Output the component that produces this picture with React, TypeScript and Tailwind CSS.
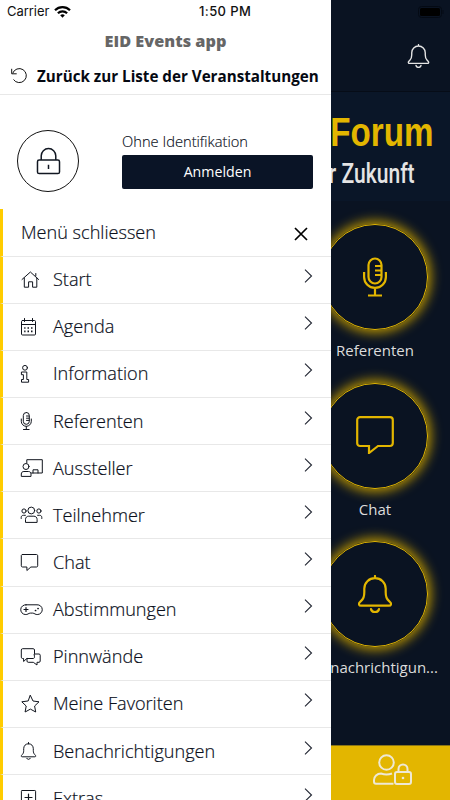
import React from 'react';
import clsx from 'clsx';

type IconProps = { className?: string };

function Icon({ children }: { children: React.ReactNode }) {
  return (
    <svg
      viewBox="0 0 24 20"
      className="h-5 w-6 shrink-0 overflow-visible"
      fill="none"
      stroke="#10141d"
      strokeWidth="1"
      strokeLinecap="round"
      strokeLinejoin="round"
    >
      {children}
    </svg>
  );
}

function BellIcon({ className }: IconProps) {
  return (
    <svg viewBox="0 0 34 38" className={className} fill="none" stroke="currentColor" strokeLinecap="round" strokeLinejoin="round">
      <path d="M17 1v2M17 3.200c-6 0-10.700 4.500-10.700 10.500v3.500c0 4-.8 6.400-2.700 8.200L1.800 27.200c-1.600 1.600-.8 3.500 1.200 3.500h28c2 0 2.800-1.900 1.200-3.500l-1.800-1.800c-1.900-1.800-2.700-4.200-2.700-8.200v-3.500C27.700 7.700 23 3.200 17 3.200Z" />
      <path d="M13 34c.3 2 2 3 4 3s3.700-1 4-3" />
    </svg>
  );
}

function MicIcon({ className }: IconProps) {
  return (
    <svg viewBox="0 0 24 40" className={className} fill="none" stroke="currentColor" strokeWidth="2.200">
      <rect x="5.500" y="1.500" width="13" height="25" rx="6.500" />
      <path d="M18 9h-6M18 13.500h-6M18 18h-6M1.100 15v5a10.900 10.900 0 0 0 21.800 0v-5M12 31v7M5 38.500h14" />
    </svg>
  );
}

function ChatIcon({ className }: IconProps) {
  return (
    <svg viewBox="0 0 38 38" className={className} fill="none" stroke="currentColor" strokeWidth="2.200">
      <path d="M4 1.200h30a2.800 2.800 0 0 1 2.800 2.800v23a3 3 0 0 1-3 3H22l-9 7v-7H4a2.800 2.800 0 0 1-2.800-2.800V4A2.800 2.800 0 0 1 4 1.200Z" />
    </svg>
  );
}

const menuItems = [
  {
    label: 'Start',
    icon: <path d="M2 9.500 10.400 2l8.200 7.500M4.300 8v9.200h4.300v-5.400h4v5.400h4.200V8M15.800 6V3.500" />,
  },
  {
    label: 'Agenda',
    icon: (
      <>
        <rect x="1.500" y="3.500" width="14" height="14.500" rx="1" />
        <path d="M1.500 7.500h14M4.500 1.500v3M12.500 1.500v3" />
        <path d="M7.500 11h1.500M11 11h1.500M4.200 11h1.300M4.200 14.300h1.300M7.500 14.300h1.500M11 14.300h1.500" strokeWidth="1.700" strokeLinecap="butt" />
      </>
    ),
  },
  {
    label: 'Information',
    icon: (
      <>
        <circle cx="5" cy="3.800" r="2.400" />
        <path d="M1.800 8h5v7.500h1.800v2.700H1.500v-2.700h1.900v-4.800H1.800Z" />
      </>
    ),
  },
  {
    label: 'Referenten',
    icon: (
      <>
        <rect x="3.300" y="1.500" width="6" height="11.800" rx="3" />
        <path d="M9 5H6.500M9 7.200H6.500M9 9.400H6.500M1.300 8v2.300a5 5 0 0 0 10 0V8M6.300 15.500v3M3.500 18.500h5.600" />
      </>
    ),
  },
  {
    label: 'Aussteller',
    icon: (
      <>
        <path d="M6.800 4.800V1.700h15.500V15H11.500M13 15v-3.200h5V15" />
        <circle cx="6" cy="8.500" r="3" />
        <path d="M1.300 18v-2c0-1.600 1.100-2.500 2.600-2.500h4.500c1.500 0 2.600.9 2.600 2.500v2Z" />
      </>
    ),
  },
  {
    label: 'Teilnehmer',
    icon: (
      <>
        <circle cx="11.300" cy="5.500" r="3.400" />
        <circle cx="4" cy="6" r="2.100" />
        <circle cx="18.900" cy="6" r="2.100" />
        <path d="M5.500 17v-2.500c0-2 1.300-3.300 3.200-3.300h5.200c1.900 0 3.200 1.300 3.200 3.300V17ZM1.200 13.500v-1c0-1.400.9-2.200 2.200-2.200h2M21.800 13.500v-1c0-1.400-.9-2.200-2.200-2.200h-2" />
      </>
    ),
  },
  {
    label: 'Chat',
    icon: <path d="M2.500 1.500h14c.7 0 1.200.5 1.200 1.200v10.100c0 .7-.5 1.200-1.200 1.200h-5.600l-4 3.500V14H2.500c-.7 0-1.200-.5-1.200-1.200V2.700c0-.7.5-1.200 1.200-1.200Z" />,
  },
  {
    label: 'Abstimmungen',
    icon: (
      <>
        <path d="M6 4.800h11a4.800 4.800 0 0 1 .8 9.700c-2.600.4-3.300-1.400-5.100-1.400h-2.400c-1.800 0-2.500 1.800-5.100 1.400A4.800 4.800 0 0 1 6 4.800Z" />
        <path d="M6 7.500v4M4 9.500h4" strokeWidth="1.200" />
        <path d="M15.500 10.500h.1M18 8.500h.1" strokeWidth="1.700" />
      </>
    ),
  },
  {
    label: 'Pinnwände',
    icon: (
      <>
        <path d="M14.500 6.500V3c0-.8-.5-1.300-1.300-1.300H2.600c-.8 0-1.300.5-1.300 1.300v7.200c0 .8.500 1.300 1.300 1.300h1v3l3.200-3" />
        <path d="M14.500 7h4.500c.8 0 1.200.5 1.200 1.200V14c0 .8-.4 1.300-1.200 1.300h-2V18l-3.700-2.700H8.200c-.8 0-1.200-.5-1.200-1.300v-2.500h6.200c.8 0 1.300-.5 1.300-1.300Z" />
      </>
    ),
  },
  {
    label: 'Meine Favoriten',
    icon: <path d="m10.400 1.500 2.600 5.500 6 .8-4.400 4.200 1.100 6-5.300-2.900L5.100 18l1.100-6-4.400-4.200 6-.8Z" />,
  },
  {
    label: 'Benachrichtigungen',
    icon: (
      <>
        <path d="M8.500 1.500v1M8.500 2.700c-3 0-4.800 2.200-4.800 5v1.800c0 2-.5 3-1.400 4l-.7.800c-.7.800-.3 1.500.5 1.500h12.800c.8 0 1.200-.7.500-1.500l-.7-.8c-.9-1-1.400-2-1.400-4V7.700c0-2.800-1.800-5-4.800-5Z" />
        <path d="M6.700 17.300c.5 1.500 3.100 1.500 3.600 0" />
      </>
    ),
  },
  {
    label: 'Extras',
    icon: (
      <>
        <rect x="1.400" y="2.500" width="14.200" height="14.500" rx="0.800" />
        <path d="M8.500 6v7M5 9.500h7" strokeWidth="1.200" />
      </>
    ),
  },
];

function Drawer() {
  return (
    <aside className="flex h-full w-[331px] shrink-0 flex-col overflow-hidden bg-white text-[#0b101c]">
      {/* Status bar */}
      <div className="flex h-6 shrink-0 items-center pl-[7px] font-['Inter',sans-serif] text-[13px] text-[#111]">
        <span className="w-[47px] tracking-[-0.05px]">Carrier</span>
        <svg viewBox="0 0 17 12" className="h-3 w-[17px]" fill="none" stroke="#000" strokeWidth="2.200">
          <path d="M1 4.200a10.700 10.700 0 0 1 15 0M3.900 7.200a6.500 6.500 0 0 1 9.200 0" />
          <path d="m8.500 11.800-2.300-2.500a3.400 3.400 0 0 1 4.600 0Z" fill="#000" stroke="none" />
        </svg>
        <span className="ml-32 whitespace-nowrap font-medium tracking-[0.4px]">1:50 PM</span>
      </div>

      <div className="flex h-[33px] shrink-0 items-center justify-center pt-px text-[16.3px] font-extrabold text-[#666]">
        EID Events app
      </div>

      <div className="flex h-[38px] shrink-0 items-center border-b border-[#e8e8e8] pl-[11px] pt-px">
        <svg viewBox="0 0 16 16" className="h-4 w-4" fill="none" stroke="#111" strokeWidth="1">
          <path d="M1.700 5.300a7 7 0 1 1 .8 6.200M.7.800v5h5" />
        </svg>
        <span className="ml-[10px] whitespace-nowrap text-[15.2px] font-bold text-[#050912]">Zurück zur Liste der Veranstaltungen</span>
      </div>

      {/* Login */}
      <div className="flex h-[114px] shrink-0 items-center pl-[17px] pt-[18px]">
        <div className="flex size-[62px] items-center justify-center rounded-full border border-[#111]">
          <svg viewBox="0 0 26 30" className="h-7 w-[25px]" fill="none" stroke="#111722" strokeWidth="1.600">
            <rect x="1.200" y="14" width="23.600" height="14.500" rx="1.800" />
            <path d="M5.200 14V9.500a7.800 7.800 0 0 1 15.600 0V14M13 19v4.500" />
          </svg>
        </div>
        <div className="ml-[43px] w-[191px]">
          <div className="h-[24px] text-[14.7px]/[17px] font-light [-webkit-text-stroke:0.15px]">Ohne Identifikation</div>
          <button className="mt-[-2px] flex h-[34px] w-full items-center justify-center rounded-[2px] bg-[#0a1426] text-[14.2px] text-white">
            Anmelden
          </button>
        </div>
      </div>

      {/* Menu */}
      <nav className="shrink-0 text-[18.1px] font-light [-webkit-text-stroke:0.2px]">
        <div className="flex h-[47.6px] items-center justify-between border-b border-l-3 border-b-[#e8e8e8] border-l-[#fc0] pl-[18px] pr-[23px]">
          <span>Menü schliessen</span>
          <svg viewBox="0 0 14 14" className="mt-[3px] h-[14px] w-[14px]" stroke="#000" strokeWidth="1.700">
            <path d="m1 1 12 12M13 1 1 13" />
          </svg>
        </div>
        {menuItems.map((item) => (
          <div
            key={item.label}
            className="flex h-[47.15px] items-center border-b border-l-3 border-b-[#e8e8e8] border-l-[#fc0] pl-[17px] pr-[18px]"
          >
            <Icon>{item.icon}</Icon>
            <span className="ml-[9px] flex-1 whitespace-nowrap">{item.label}</span>
            <svg viewBox="0 0 9 14" className="mb-[7px] h-[14px] w-[9px]" fill="none" stroke="#222733" strokeWidth="1.100">
              <path d="m1 .700 6.500 6.300L1 13.300" />
            </svg>
          </div>
        ))}
      </nav>
    </aside>
  );
}

const tiles = [
  { label: 'Referenten', icon: <MicIcon className="h-10 w-6" /> },
  { label: 'Chat', icon: <ChatIcon className="size-[38px]" /> },
  { label: 'Benachrichtigun...', icon: <BellIcon className="h-[38px] w-[34px] stroke-[2.2]" /> },
];

function HomeScreen() {
  return (
    <main className="flex h-full w-[119px] shrink-0 flex-col overflow-hidden bg-[#0a1322] text-[#dcdcdc]">
      {/* Header */}
      <div className="flex h-[92px] shrink-0 flex-col border-b border-[#060c17]">
        <div className="flex h-6 items-center pl-[87px]">
          <svg viewBox="0 0 26 12" className="h-3 w-[26px]">
            <rect x="0.500" y="0.500" width="23" height="11" rx="3" fill="none" stroke="#040a14" />
            <rect x="2" y="2" width="20" height="8" rx="1.500" fill="#000" />
            <path d="M25 4v4" stroke="#040a14" />
          </svg>
        </div>
        <BellIcon className="ml-[76px] mt-[20px] h-[24px] w-[23px] text-[#e5e5e5] stroke-[2.2]" />
      </div>

      {/* Banner */}
      <div className="flex h-[109px] shrink-0 flex-col items-end bg-[#0a1628] pt-5 font-bold">
        <span className="mr-4 origin-right scale-x-[0.81] font-['Liberation_Sans',sans-serif] text-[41px]/[41px] text-[#e3b600]">
          Forum
        </span>
        <span className="mr-[35px] mt-[5px] origin-right scale-x-[0.78] whitespace-nowrap font-['Roboto',sans-serif] text-[27px]/[32px] font-medium text-[#e4e4e4]">
          der Zukunft
        </span>
      </div>

      <div className="flex w-[88px] flex-1 flex-col items-center pt-[23px]">
        {tiles.map((tile, i) => (
          <div key={tile.label} className="flex h-[158.5px] shrink-0 flex-col items-center">
            <div
              className={clsx(
                'flex size-[106px] shrink-0 items-center justify-center rounded-full border border-[#e3b600] text-[#e3b600]',
                'shadow-[0_0_12px_3px_#b89300]',
                i === 1 && 'pb-0.5',
              )}
            >
              {tile.icon}
            </div>
            <span className="mt-[8px] whitespace-nowrap text-[15px]/6">{tile.label}</span>
          </div>
        ))}
      </div>

      {/* Tab bar */}
      <div className="flex h-[55px] shrink-0 justify-center border-t border-[#8a7415] bg-[#e3b600] pt-[8px] pl-[3px]">
        <svg viewBox="0 0 40 33" className="h-[33px] w-10" fill="none" stroke="#eee8d4" strokeWidth="2">
          <circle cx="14.500" cy="8.500" r="7.300" />
          <path d="M20 19.500c-3.500 1.300-7.500 1.300-11 0-4 0-7 3-7 6.500v1.800c0 1.200.8 2 2 2h17.500" />
          <rect x="23" y="18" width="16" height="12" rx="2" />
          <path d="M26.500 18v-3a4.500 4.500 0 0 1 9 0v3" />
          <circle cx="31" cy="24" r="1.300" fill="#eee8d4" stroke="none" />
        </svg>
      </div>
    </main>
  );
}

export default function App() {
  return (
    <div className="flex h-[800px] w-[450px] overflow-hidden bg-white font-['Open_Sans',sans-serif]">
      <Drawer />
      <HomeScreen />
    </div>
  );
}
